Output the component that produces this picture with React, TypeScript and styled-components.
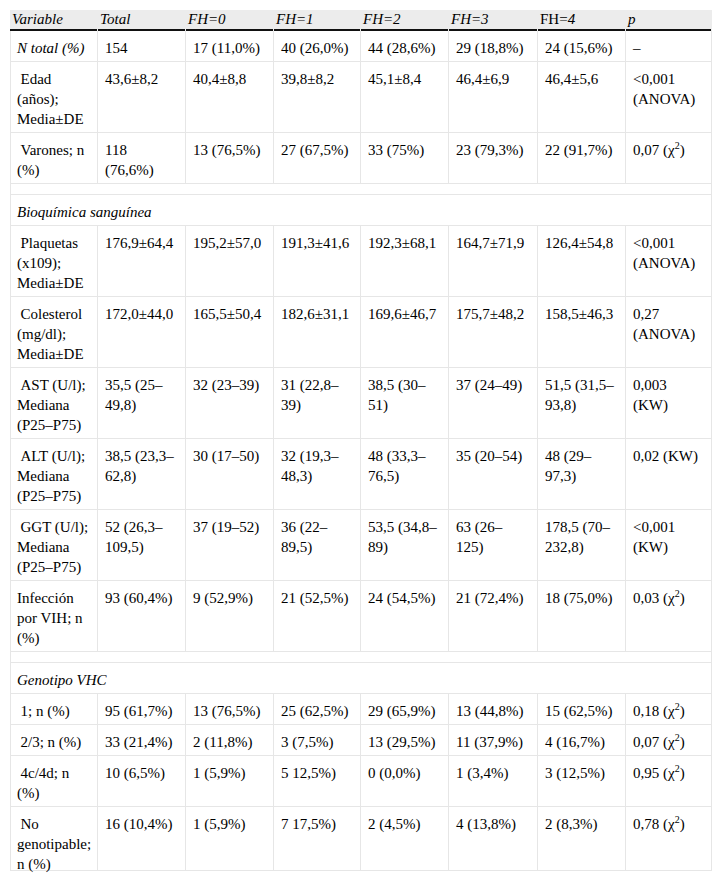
import React from "react";
import styled, { createGlobalStyle } from "styled-components";

const GlobalStyle = createGlobalStyle`
  html, body {
    margin: 0;
    padding: 0;
    background: #ffffff;
  }
  body {
    font-family: "Liberation Serif", "Times New Roman", serif;
    color: #000000;
  }
`;

const Page = styled.div`
  padding: 10px;
`;

const Table = styled.table`
  width: 702px;
  table-layout: fixed;
  border-collapse: separate;
  border-spacing: 0;
  font-family: "Liberation Serif", "Times New Roman", serif;
  font-size: 15px;
  line-height: 20px;
  color: #000;
`;

const Col = styled.col<{ $w: number }>`
  width: ${(p) => p.$w}px;
`;

const HeadCell = styled.th`
  text-align: left;
  font-weight: normal;
  font-style: italic;
  line-height: 19px;
  padding: 0 2px 2px 2px;
  white-space: nowrap;
  background: linear-gradient(#111, #111) left bottom / calc(100% - 1px) 2px
      no-repeat,
    #ececec;
`;

const Upright = styled.span`
  font-style: normal;
`;

const Cell = styled.td<{ $indent?: boolean; $italic?: boolean; $first?: boolean; $last?: boolean }>`
  vertical-align: top;
  text-align: left;
  padding: 7px 4px 3px ${(p) => (p.$first ? "6px" : "7px")};
  font-style: ${(p) => (p.$italic ? "italic" : "normal")};
  border-right: 1px solid #e6e6e6;
  border-bottom: 1px solid #e6e6e6;
  &:first-child {
    border-left: 1px solid #e6e6e6;
  }
  ${(p) => (p.$indent ? "& > span:first-child { text-indent: 3.5px; }" : "")}
  ${(p) => (p.$last ? "& > span:last-child { margin-bottom: -7px; }" : "")}
`;

const SectionCell = styled(Cell).attrs({ colSpan: 8, $first: true })`
  font-style: italic;
`;

const SpacerCell = styled(Cell).attrs({ colSpan: 8, $first: true })``;

const Line = styled.span`
  display: block;
  white-space: nowrap;
`;

const Sup = styled.sup`
  font-size: 10px;
  line-height: 0;
  vertical-align: 6px;
`;

type Value = string | string[] | React.ReactNode;

interface DataRow {
  label: string[];
  indent?: boolean;
  italic?: boolean;
  values: Value[];
}

const chi = (p: string) => (
  <>
    {p} (χ<Sup>2</Sup>)
  </>
);

const renderValue = (v: Value) => {
  if (Array.isArray(v) && v.every((x) => typeof x === "string")) {
    return (v as string[]).map((line, i) => <Line key={i}>{line}</Line>);
  }
  return <Line>{v as React.ReactNode}</Line>;
};

type Section =
  | { kind: "rows"; rows: DataRow[] }
  | { kind: "spacer" }
  | { kind: "title"; title: string };

const sections: Section[] = [
  {
    kind: "rows",
    rows: [
      {
        label: ["N total (%)"],
        italic: true,
        values: ["154", "17 (11,0%)", "40 (26,0%)", "44 (28,6%)", "29 (18,8%)", "24 (15,6%)", "–"],
      },
      {
        label: ["Edad", "(años);", "Media±DE"],
        indent: true,
        values: ["43,6±8,2", "40,4±8,8", "39,8±8,2", "45,1±8,4", "46,4±6,9", "46,4±5,6", ["<0,001", "(ANOVA)"]],
      },
      {
        label: ["Varones; n", "(%)"],
        indent: true,
        values: [["118", "(76,6%)"], "13 (76,5%)", "27 (67,5%)", "33 (75%)", "23 (79,3%)", "22 (91,7%)", chi("0,07")],
      },
    ],
  },
  { kind: "spacer" },
  { kind: "title", title: "Bioquímica sanguínea" },
  {
    kind: "rows",
    rows: [
      {
        label: ["Plaquetas", "(x109);", "Media±DE"],
        indent: true,
        values: ["176,9±64,4", "195,2±57,0", "191,3±41,6", "192,3±68,1", "164,7±71,9", "126,4±54,8", ["<0,001", "(ANOVA)"]],
      },
      {
        label: ["Colesterol", "(mg/dl);", "Media±DE"],
        indent: true,
        values: ["172,0±44,0", "165,5±50,4", "182,6±31,1", "169,6±46,7", "175,7±48,2", "158,5±46,3", ["0,27", "(ANOVA)"]],
      },
      {
        label: ["AST (U/l);", "Mediana", "(P25–P75)"],
        indent: true,
        values: [["35,5 (25–", "49,8)"], "32 (23–39)", ["31 (22,8–", "39)"], ["38,5 (30–", "51)"], "37 (24–49)", ["51,5 (31,5–", "93,8)"], ["0,003", "(KW)"]],
      },
      {
        label: ["ALT (U/l);", "Mediana", "(P25–P75)"],
        indent: true,
        values: [["38,5 (23,3–", "62,8)"], "30 (17–50)", ["32 (19,3–", "48,3)"], ["48 (33,3–", "76,5)"], "35 (20–54)", ["48 (29–", "97,3)"], "0,02 (KW)"],
      },
      {
        label: ["GGT (U/l);", "Mediana", "(P25–P75)"],
        indent: true,
        values: [["52 (26,3–", "109,5)"], "37 (19–52)", ["36 (22–", "89,5)"], ["53,5 (34,8–", "89)"], ["63 (26–", "125)"], ["178,5 (70–", "232,8)"], ["<0,001", "(KW)"]],
      },
      {
        label: ["Infección", "por VIH; n", "(%)"],
        values: ["93 (60,4%)", "9 (52,9%)", "21 (52,5%)", "24 (54,5%)", "21 (72,4%)", "18 (75,0%)", chi("0,03")],
      },
    ],
  },
  { kind: "spacer" },
  { kind: "title", title: "Genotipo VHC" },
  {
    kind: "rows",
    rows: [
      {
        label: ["1; n (%)"],
        indent: true,
        values: ["95 (61,7%)", "13 (76,5%)", "25 (62,5%)", "29 (65,9%)", "13 (44,8%)", "15 (62,5%)", chi("0,18")],
      },
      {
        label: ["2/3; n (%)"],
        indent: true,
        values: ["33 (21,4%)", "2 (11,8%)", "3 (7,5%)", "13 (29,5%)", "11 (37,9%)", "4 (16,7%)", chi("0,07")],
      },
      {
        label: ["4c/4d; n", "(%)"],
        indent: true,
        values: ["10 (6,5%)", "1 (5,9%)", "5 12,5%)", "0 (0,0%)", "1 (3,4%)", "3 (12,5%)", chi("0,95")],
      },
      {
        label: ["No", "genotipable;", "n (%)"],
        indent: true,
        values: ["16 (10,4%)", "1 (5,9%)", "7 17,5%)", "2 (4,5%)", "4 (13,8%)", "2 (8,3%)", chi("0,78")],
      },
    ],
  },
];

const headers: React.ReactNode[] = [
  "Variable",
  "Total",
  "FH=0",
  "FH=1",
  "FH=2",
  "FH=3",
  <>
    <Upright>FH=</Upright>4
  </>,
  "p",
];

const colWidths = [88, 88, 88, 87, 88, 89, 88, 86];

export default function App() {
  const lastSection = sections.length - 1;
  return (
    <>
      <GlobalStyle />
      <Page>
        <Table>
          <colgroup>
            {colWidths.map((w, i) => (
              <Col key={i} $w={w} />
            ))}
          </colgroup>
          <thead>
            <tr>
              {headers.map((h, i) => (
                <HeadCell key={i}>{h}</HeadCell>
              ))}
            </tr>
          </thead>
          <tbody>
            {sections.map((s, si) => {
              if (s.kind === "spacer") {
                return (
                  <tr key={si}>
                    <SpacerCell />
                  </tr>
                );
              }
              if (s.kind === "title") {
                return (
                  <tr key={si}>
                    <SectionCell>{s.title}</SectionCell>
                  </tr>
                );
              }
              return s.rows.map((r, ri) => {
                const last = si === lastSection && ri === s.rows.length - 1;
                return (
                  <tr key={`${si}-${ri}`}>
                    <Cell $first $indent={r.indent} $italic={r.italic} $last={last}>
                      {r.label.map((l, li) => (
                        <Line key={li}>{l}</Line>
                      ))}
                    </Cell>
                    {r.values.map((v, vi) => (
                      <Cell key={vi} $last={last}>
                        {renderValue(v)}
                      </Cell>
                    ))}
                  </tr>
                );
              });
            })}
          </tbody>
        </Table>
      </Page>
    </>
  );
}
